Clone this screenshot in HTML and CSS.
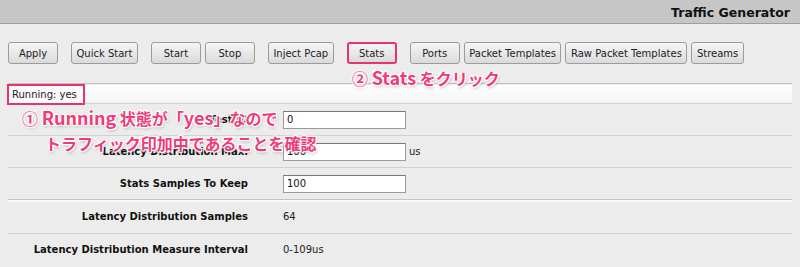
FILE: index.html
```html
<!DOCTYPE html>
<html lang="ja">
<head>
    <meta charset="UTF-8">
    <meta name="viewport" content="width=device-width, initial-scale=1.0">
    <title>Traffic Generator</title>
    <link rel="stylesheet" href="styles.css">
</head>
<body>
    <div class="header">Traffic Generator</div>

    <div class="toolbar">
        <div class="group"><button>Apply</button></div>
        <div class="group"><button>Quick Start</button></div>
        <div class="group"><button>Start</button><button>Stop</button></div>
        <div class="group"><button>Inject Pcap</button></div>
        <div class="group"><button class="marked">Stats</button></div>
        <div class="group">
            <button>Ports</button>
            <button>Packet Templates</button>
            <button>Raw Packet Templates</button>
            <button>Streams</button>
        </div>
    </div>

    <div class="panel">
        <div class="status"><span class="status-text">Running: yes</span></div>

        <div class="row">
            <div class="label">Test ID</div>
            <div class="value"><input type="text" value="0"></div>
        </div>
        <div class="row">
            <div class="label">Latency Distribution Max.</div>
            <div class="value"><input type="text" value="100"><span class="unit">us</span></div>
        </div>
        <div class="row">
            <div class="label">Stats Samples To Keep</div>
            <div class="value"><input type="text" value="100"></div>
        </div>
        <div class="row section">
            <div class="label">Latency Distribution Samples</div>
            <div class="value">64</div>
        </div>
        <div class="row">
            <div class="label">Latency Distribution Measure Interval</div>
            <div class="value">0-109us</div>
        </div>
    </div>

    <!-- annotations -->
    <div class="note note-stats">② <span class="latin">Stats</span> をクリック</div>
    <div class="note note-running">① <span class="latin">Running</span> 状態が「<span class="latin">yes</span>」なので<br><span class="indent">トラフィック印加中であることを確認</span></div>
</body>
</html>
```

FILE: styles.css
```css
body {
    margin: 0;
    height: 267px;
    overflow: hidden;
    position: relative;
    background-color: #ececec;
    font-family: "DejaVu Sans", Verdana, sans-serif;
    font-size: 10px;
    color: #222;
}
.header {
    height: 23px;
    line-height: 26px;
    background-color: #c6c6c6;
    border-bottom: 1px solid #9e9e9e;
    text-align: right;
    padding-right: 10px;
    font-size: 12.5px;
    font-weight: bold;
    color: #111;
}
.toolbar {
    display: flex;
    gap: 13px;
    padding: 18px 8px 0;
}
.group {
    display: flex;
    gap: 4px;
}
button {
    height: 22px;
    min-width: 50px;
    padding: 0 4.5px;
    border: 1px solid #9c9c9c;
    border-radius: 3px;
    background: linear-gradient(#f6f6f6, #dadada);
    font-family: inherit;
    font-size: 10px;
    color: #222;
}
button.marked {
    border: 2px solid #e8336b;
}
.panel {
    margin: 19px 8px 0;
}
.status {
    border-top: 1px solid #c2c2c2;
    padding-top: 1px;
    height: 18px;
    background: linear-gradient(#fdfdfd, #f6f6f6) 0 1px / 100% 17px no-repeat;
}
.status-text {
    display: inline-block;
    height: 17px;
    line-height: 17px;
    margin: -1px 0 0 -1px;
    padding: 0 6px 0 3px;
    border: 2px solid #e8336b;
    background-color: #fbfbfb;
    position: relative;
    z-index: 1;
}
.row {
    display: grid;
    grid-template-columns: 240px 1fr;
    align-items: center;
    height: 31px;
    border-top: 1px solid #d2d2d2;
}
.row.section {
    border-top: 1px solid #c4c4c4;
    box-shadow: inset 0 2px 0 #f8f8f8;
    height: 33px;
}
.label {
    text-align: right;
    font-weight: bold;
    color: #111;
}
.value {
    padding-left: 35px;
    display: flex;
    align-items: center;
}
input {
    width: 115px;
    height: 16px;
    padding: 0 3px;
    border: 1px solid #9a9a9a;
    border-top-color: #777;
    background-color: #fff;
    font-family: inherit;
    font-size: 10px;
    color: #111;
}
.unit {
    margin-left: 3px;
}
.note {
    position: absolute;
    font-family: "Noto Sans CJK JP", sans-serif;
    font-weight: bold;
    font-size: 16px;
    line-height: 25px;
    color: #ef3b76;
    white-space: nowrap;
    text-shadow: 0 0 2px #fff, 0 0 2px #fff, 1px 1px 1px #fff, -1px -1px 1px #fff, 1px -1px 1px #fff, -1px 1px 1px #fff, 1px 2px 3px rgba(0,0,0,0.25);
    z-index: 2;
}
.latin {
    font-size: 18px;
}
.note-stats {
    left: 352px;
    top: 65px;
}
.note-running {
    left: 22px;
    top: 105px;
}
.indent {
    margin-left: 23px;
}
```
